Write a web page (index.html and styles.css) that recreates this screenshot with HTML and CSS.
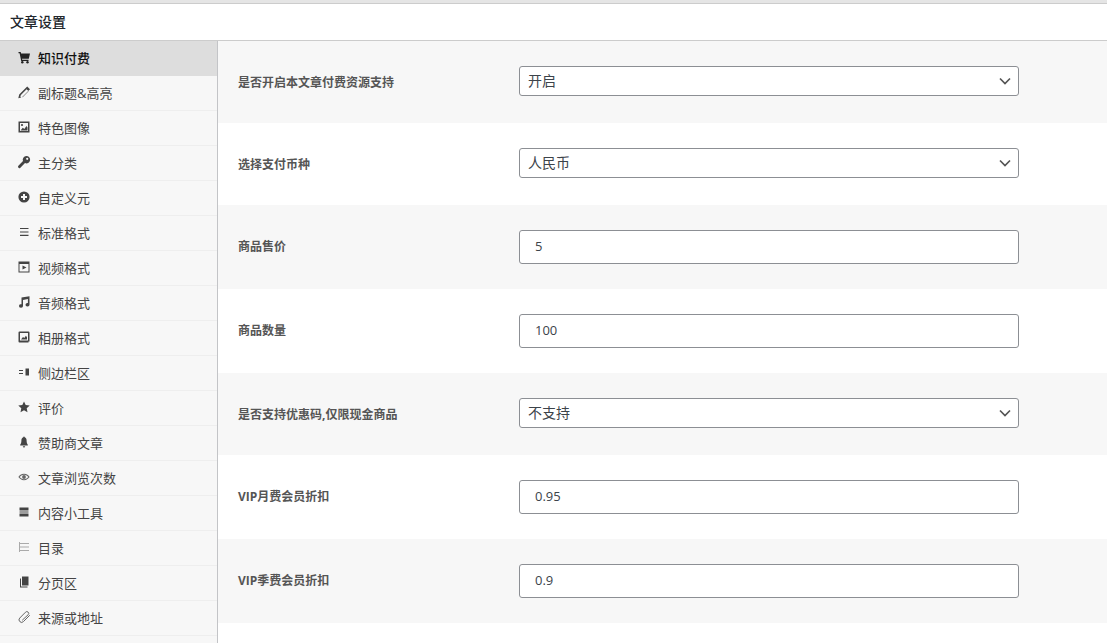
FILE: index.html
```html
<!DOCTYPE html>
<html lang="zh-CN">
<head>
    <meta charset="UTF-8">
    <title>文章设置</title>
    <meta name="viewport" content="width=device-width, initial-scale=1.0">
    <link rel="stylesheet" href="styles.css">
</head>
<body>

    <div class="panel">
        <h2 class="panel-title">文章设置</h2>

        <div class="panel-body">
            <ul class="side-menu">
                <li class="side-item active">
                    <svg class="side-icon" viewBox="0 0 16 16"><path d="M2.500 3h2.200l.4 1.500H14l-1.200 5.300H6l.2 1h6.300v1.200H5.200L3.600 4.200H2.500z"/><circle cx="6.300" cy="13.200" r="1.200"/><circle cx="11.500" cy="13.200" r="1.200"/></svg>
                    <span>知识付费</span>
                </li>
                <li class="side-item">
                    <svg class="side-icon" viewBox="0 0 16 16"><path fill-rule="evenodd" d="M11.200 2.500l2.800 2.800-8 8-3.700.9.900-3.700zM10.600 5.200L4.900 10.900l-.6 1.700.9.900 1.700-.6 5.700-5.700z"/></svg>
                    <span>副标题&amp;高亮</span>
                </li>
                <li class="side-item">
                    <svg class="side-icon" viewBox="0 0 16 16"><path fill-rule="evenodd" d="M2.500 2.500h11v11h-11zM4 4v8h8V4z"/><circle cx="6" cy="6" r="1.100"/><path d="M4.500 11.500l2.300-2.800 1.500 1.200 2.200-3 1 1.500v3.100z"/></svg>
                    <span>特色图像</span>
                </li>
                <li class="side-item">
                    <svg class="side-icon" viewBox="0 0 16 16"><path fill-rule="evenodd" d="M10.300 2a3.700 3.700 0 1 1-1.300 7.100L4.400 13.700a1.300 1.300 0 0 1-2-1.900L7 7.100A3.700 3.700 0 0 1 10.300 2zM11.200 3.700a1.100 1.100 0 1 0 0 2.200 1.100 1.100 0 0 0 0-2.200z"/></svg>
                    <span>主分类</span>
                </li>
                <li class="side-item">
                    <svg class="side-icon" viewBox="0 0 16 16"><path fill-rule="evenodd" d="M8 2.400a5.600 5.600 0 1 1 0 11.200A5.600 5.600 0 0 1 8 2.400zM7 5v2H5v2h2v2h2V9h2V7H9V5z"/></svg>
                    <span>自定义元</span>
                </li>
                <li class="side-item">
                    <svg class="side-icon" viewBox="0 0 16 16"><path d="M4 4h8.500v1.100H4zM4 7.400h8.500v1.100H4zM4 10.800h8.500v1.100H4z"/></svg>
                    <span>标准格式</span>
                </li>
                <li class="side-item">
                    <svg class="side-icon" viewBox="0 0 16 16"><path fill-rule="evenodd" d="M2.500 2.500h11v11h-11zM3.500 5v7.500h9V5z"/><path d="M6.500 6.500l4 2-4 2z"/></svg>
                    <span>视频格式</span>
                </li>
                <li class="side-item">
                    <svg class="side-icon" viewBox="0 0 16 16"><path d="M5.500 3.600l8-1.400v8.500a2 1.700 0 1 1-1.600-1.600V5L7 5.900v6a2 1.700 0 1 1-1.500-1.600z"/></svg>
                    <span>音频格式</span>
                </li>
                <li class="side-item">
                    <svg class="side-icon" viewBox="0 0 16 16"><path fill-rule="evenodd" d="M3.500 2.500h9a1 1 0 0 1 1 1v9h-1v1h-9a1 1 0 0 1-1-1v-9a1 1 0 0 1 1-1zM4 4v7.500h8V4z"/><path d="M5 10.500l2-2.500 1.300 1 1.600-2.200 1.100 1.500v2.200z"/></svg>
                    <span>相册格式</span>
                </li>
                <li class="side-item">
                    <svg class="side-icon" viewBox="0 0 16 16"><path d="M3 6h4v1H3zM3 9h4v1H3zM9.500 4.500h3.500v7H9.500z"/></svg>
                    <span>侧边栏区</span>
                </li>
                <li class="side-item">
                    <svg class="side-icon" viewBox="0 0 16 16"><path d="M8 2.400l1.700 3.700 4 .5-3 2.700.8 4L8 11.300l-3.500 2 .8-4-3-2.700 4-.5z"/></svg>
                    <span>评价</span>
                </li>
                <li class="side-item">
                    <svg class="side-icon" viewBox="0 0 16 16"><path d="M8 2.500c.4 0 .7.300.7.700 1.300.4 1.900 1.600 1.900 3.300 0 2.300.6 3.400 1.200 4.200v.8H4.200v-.8c.6-.8 1.200-1.900 1.200-4.200 0-1.700.6-2.900 1.900-3.300 0-.4.3-.7.700-.7z"/><path d="M6.800 12.300h2.400a1.200 1.200 0 0 1-2.400 0z"/></svg>
                    <span>赞助商文章</span>
                </li>
                <li class="side-item">
                    <svg class="side-icon eye" viewBox="0 0 16 16"><path fill-rule="evenodd" d="M8 4.800c2.800 0 4.700 1.800 5.600 3.200-.9 1.400-2.800 3.200-5.600 3.200S3.300 9.400 2.400 8C3.300 6.600 5.200 4.800 8 4.800zM3.700 8c.9 1.100 2.300 2.300 4.300 2.300s3.400-1.200 4.300-2.300C11.400 6.900 10 5.700 8 5.700S4.600 6.900 3.700 8z"/><circle cx="8" cy="8" r="1.900"/></svg>
                    <span>文章浏览次数</span>
                </li>
                <li class="side-item">
                    <svg class="side-icon" viewBox="0 0 16 16"><path d="M3.500 3.500h9v3h-9zM3.500 7.500h9v1h-9zM3.500 9.500h9v3h-9z"/></svg>
                    <span>内容小工具</span>
                </li>
                <li class="side-item muted">
                    <svg class="side-icon" viewBox="0 0 16 16"><path d="M3 3h1v10H3zM6 4h7v1H6zM6 7.500h7v1H6zM6 11h7v1H6zM4 4h2v1H4zM4 7.500h2v1H4zM4 11h2v1H4z"/></svg>
                    <span>目录</span>
                </li>
                <li class="side-item">
                    <svg class="side-icon" viewBox="0 0 16 16"><path d="M6 2.500h6.500v9H6z"/><path d="M4 4.500h1v8h6.500v1H4z"/></svg>
                    <span>分页区</span>
                </li>
                <li class="side-item">
                    <svg class="side-icon clip" viewBox="0 0 16 16"><path d="M13.500 6.500L7.500 12.500a2.500 2.500 0 0 1-3.800-3.400L9.500 3.200a1.800 1.800 0 0 1 2.700 2.500L6.500 11"/></svg>
                    <span>来源或地址</span>
                </li>
            </ul>

            <div class="fields">
                <div class="field-row">
                    <label class="field-label">是否开启本文章付费资源支持</label>
                    <select class="field-select"><option>开启</option></select>
                </div>
                <div class="field-row">
                    <label class="field-label">选择支付币种</label>
                    <select class="field-select"><option>人民币</option></select>
                </div>
                <div class="field-row">
                    <label class="field-label">商品售价</label>
                    <input class="field-input" type="text" value="5">
                </div>
                <div class="field-row">
                    <label class="field-label">商品数量</label>
                    <input class="field-input" type="text" value="100">
                </div>
                <div class="field-row">
                    <label class="field-label">是否支持优惠码,仅限现金商品</label>
                    <select class="field-select"><option>不支持</option></select>
                </div>
                <div class="field-row">
                    <label class="field-label">VIP月费会员折扣</label>
                    <input class="field-input" type="text" value="0.95">
                </div>
                <div class="field-row">
                    <label class="field-label">VIP季费会员折扣</label>
                    <input class="field-input" type="text" value="0.9">
                </div>
            </div>
        </div>
    </div>

</body>
</html>
```

FILE: styles.css
```css
html, body {
    height: 100%;
}

body {
    margin: 0;
    overflow: hidden;
    background: #fff;
    color: #444;
    font-family: "Open Sans", "Noto Sans CJK SC", sans-serif;
}

.panel {
    height: 100%;
    display: flex;
    flex-direction: column;
    box-sizing: border-box;
    background: #fff;
    border-top: 3px solid #e5e5e5;
}

.panel-title {
    margin: 0;
    height: 38px;
    box-sizing: border-box;
    padding-left: 10px;
    border-top: 1px solid #ccc;
    border-bottom: 1px solid #ccc;
    font-size: 14px;
    font-weight: 500;
    line-height: 35px;
    color: #23282d;
}

.panel-body {
    flex: 1;
    display: flex;
    min-height: 0;
}

.side-menu {
    width: 218px;
    flex-shrink: 0;
    box-sizing: border-box;
    margin: 0;
    padding: 0;
    list-style: none;
    background: #f7f7f7;
    border-right: 1px solid #c3c4c7;
}

.side-item {
    height: 35px;
    box-sizing: border-box;
    display: flex;
    align-items: center;
    gap: 6px;
    padding: 0 0 2px 16px;
    border-bottom: 1px solid #eee;
    font-size: 13px;
    color: #444;
}

.side-item.active {
    background: #ddd;
    border-bottom-color: #ddd;
    color: #111;
    font-weight: 500;
}

.side-icon {
    width: 16px;
    height: 16px;
    flex-shrink: 0;
    fill: #444;
}

.side-item.active .side-icon {
    fill: #222;
}

.side-item.muted .side-icon {
    fill: #aaa;
}

.side-icon.eye {
    fill: #666;
}

.side-icon.clip {
    fill: none;
    stroke: #666;
    stroke-width: 1;
    stroke-linecap: round;
}

.fields {
    flex: 1;
    min-width: 0;
}

.field-row {
    display: flex;
    align-items: flex-start;
    padding: 25px 0 25px 20px;
}

.field-row:nth-child(odd) {
    background: #f7f7f7;
}

.field-label {
    width: 281px;
    flex-shrink: 0;
    font-size: 12px;
    font-weight: 700;
    color: #555;
    line-height: 34px;
    margin-bottom: -2px;
}

.field-select,
.field-input {
    width: 500px;
    box-sizing: border-box;
    border: 1px solid #8c8f94;
    border-radius: 3px;
    background-color: #fff;
    color: #3c434a;
    font-family: "Open Sans", "Noto Sans CJK SC", sans-serif;
    margin: 0;
}

.field-select {
    height: 30px;
    margin-bottom: 2px;
    padding: 0 24px 2px 8px;
    font-size: 14px;
    appearance: none;
    background-image: url("data:image/svg+xml,%3Csvg xmlns='http://www.w3.org/2000/svg' width='12' height='8' viewBox='0 0 12 8'%3E%3Cpath d='M1 1.500l5 5 5-5' fill='none' stroke='%23555' stroke-width='1.700'/%3E%3C/svg%3E");
    background-repeat: no-repeat;
    background-position: right 7px center;
}

.field-input {
    height: 34px;
    padding: 0 15px 2px;
    font-size: 13px;
}
```
